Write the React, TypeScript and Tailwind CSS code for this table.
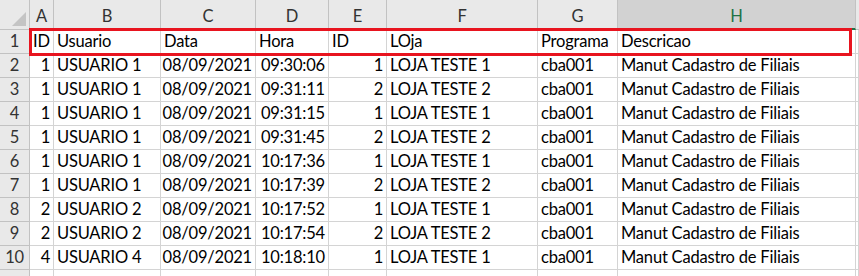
const columns = ["A", "B", "C", "D", "E", "F", "G", "H"];

const header = ["ID", "Usuario", "Data", "Hora", "ID", "LOja", "Programa", "Descricao"];

const rows = [
  ["1", "USUARIO 1", "08/09/2021", "09:30:06", "1", "LOJA TESTE 1", "cba001", "Manut Cadastro de Filiais"],
  ["1", "USUARIO 1", "08/09/2021", "09:31:11", "2", "LOJA TESTE 2", "cba001", "Manut Cadastro de Filiais"],
  ["1", "USUARIO 1", "08/09/2021", "09:31:15", "1", "LOJA TESTE 1", "cba001", "Manut Cadastro de Filiais"],
  ["1", "USUARIO 1", "08/09/2021", "09:31:45", "2", "LOJA TESTE 2", "cba001", "Manut Cadastro de Filiais"],
  ["1", "USUARIO 1", "08/09/2021", "10:17:36", "1", "LOJA TESTE 1", "cba001", "Manut Cadastro de Filiais"],
  ["1", "USUARIO 1", "08/09/2021", "10:17:39", "2", "LOJA TESTE 2", "cba001", "Manut Cadastro de Filiais"],
  ["2", "USUARIO 2", "08/09/2021", "10:17:52", "1", "LOJA TESTE 1", "cba001", "Manut Cadastro de Filiais"],
  ["2", "USUARIO 2", "08/09/2021", "10:17:54", "2", "LOJA TESTE 2", "cba001", "Manut Cadastro de Filiais"],
  ["4", "USUARIO 4", "08/09/2021", "10:18:10", "1", "LOJA TESTE 1", "cba001", "Manut Cadastro de Filiais"],
];

// numbers, dates and times sit on the right like Excel does
const rightAligned = [true, false, true, true, true, false, false, false];

const cell = "h-[24px] border-r border-b border-[#d4d4d4] flex items-end pb-[1px] overflow-hidden whitespace-nowrap";
const rowHead = "h-[24px] border-r border-b border-[#c2c2c2] bg-[#e9e9e9] flex items-end justify-center pb-[1px] text-[#333]";

export default function App() {
  return (
    <div className="relative w-[859px] h-[276px] overflow-hidden bg-white text-black text-[16.5px] tracking-[-0.2px] leading-[22px] [font-family:Lato,'Liberation_Sans',sans-serif]">
      <div className="grid grid-cols-[30px_24px_107px_95px_73px_58px_151px_80px_238px_1fr]">
        {/* corner */}
        <div className="h-[30px] bg-[#e9e9e9] border-r border-b border-[#c2c2c2] flex items-end justify-end p-[3px]">
          <svg width="14" height="14" viewBox="0 0 14 14">
            <polygon points="14,0 14,14 0,14" fill="#c4c4c4" />
          </svg>
        </div>
        {columns.map((c) =>
          c === "H" ? (
            <div
              key={c}
              className="h-[30px] bg-[#d2d2d2] border-r border-[#c2c2c2] border-b-2 border-b-[#217346] flex items-end justify-center pb-[1px] text-[#217346]"
            >
              {c}
            </div>
          ) : (
            <div
              key={c}
              className="h-[30px] bg-[#e9e9e9] border-r border-b border-[#c2c2c2] flex items-end justify-center pb-[2px] text-[#333]"
            >
              {c}
            </div>
          )
        )}
        <div className="h-[30px] bg-[#e9e9e9] border-b border-[#c2c2c2]" />

        {/* row 1 - headers */}
        <div className={rowHead}>1</div>
        {header.map((h, i) => (
          <div key={i} className={`${cell} pl-[3px]`}>
            {h}
          </div>
        ))}
        <div className={cell} />

        {rows.map((r, ri) => (
          <div key={ri} className="contents">
            <div className={rowHead}>{ri + 2}</div>
            {r.map((v, ci) => (
              <div
                key={ci}
                className={`${cell} ${rightAligned[ci] ? "justify-end pr-[3px]" : "pl-[3px]"}`}
              >
                {v}
              </div>
            ))}
            <div className={cell} />
          </div>
        ))}

        <div className={rowHead} />
        {columns.map((c) => (
          <div key={c} className={cell} />
        ))}
        <div className={cell} />
      </div>

      {/* red highlight around header row */}
      <div className="absolute left-[29px] top-[28px] w-[823px] h-[28px] border-[3px] border-[#e8141f] pointer-events-none" />
    </div>
  );
}
